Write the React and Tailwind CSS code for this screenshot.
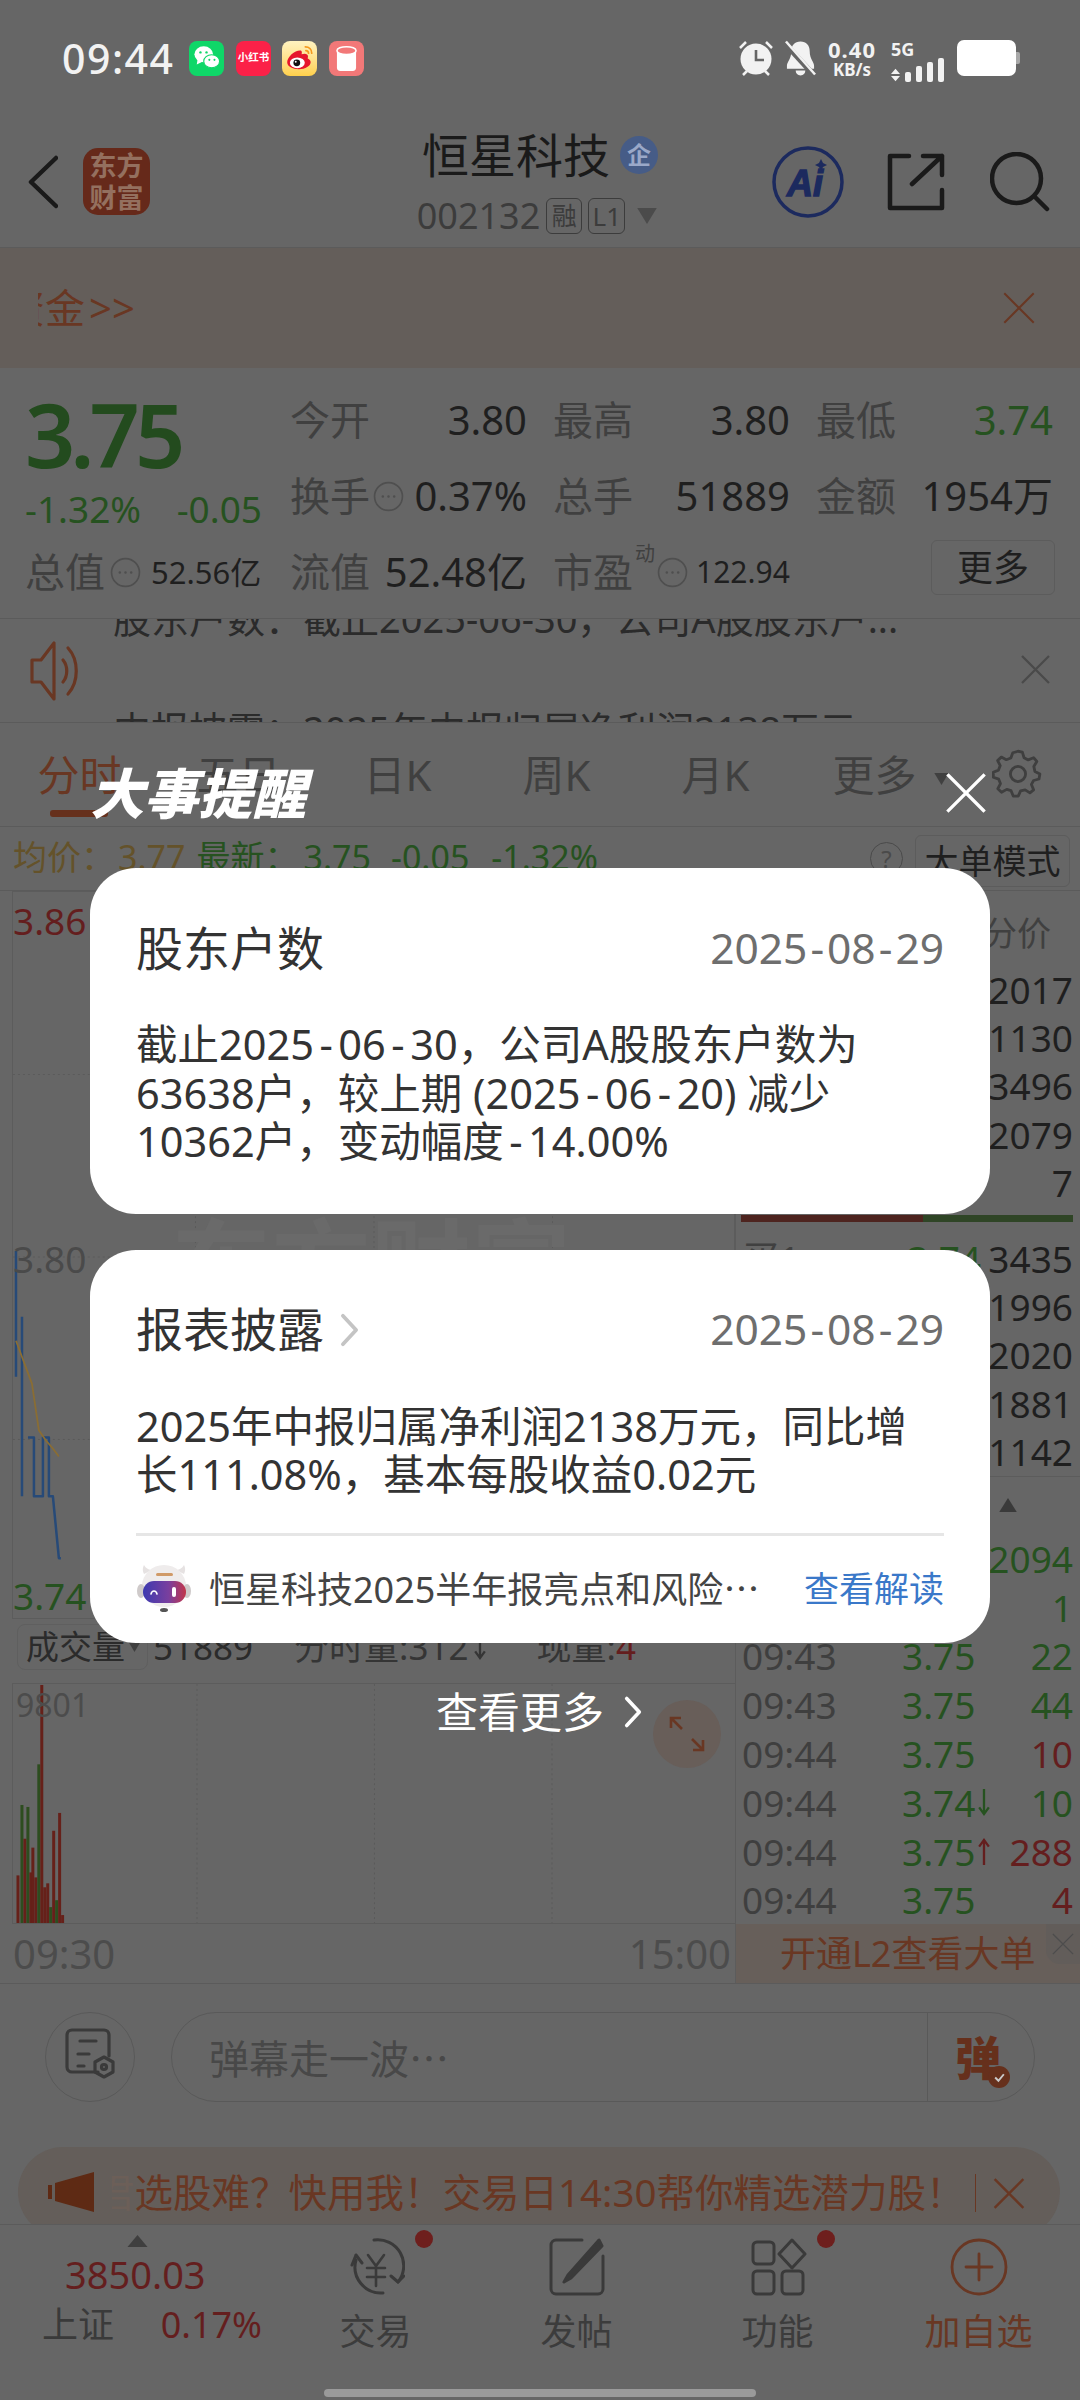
import React from 'react';

const Chevron = ({ className = '' }) => (
  <svg viewBox="0 0 20 36" className={className} fill="none" stroke="currentColor" strokeWidth="4" strokeLinecap="round" strokeLinejoin="round">
    <path d="M3 3l14 15L3 33" />
  </svg>
);

const Cross = ({ className = '', width = 2 }) => (
  <svg viewBox="0 0 32 32" className={className} fill="none" stroke="currentColor" strokeWidth={width} strokeLinecap="square">
    <path d="M2 2l28 28M30 2L2 30" />
  </svg>
);

const Dots = () => (
  <svg viewBox="0 0 30 30" className="h-[31px] w-[31px] shrink-0" fill="none" stroke="#4f4f4f" strokeWidth="1.6">
    <circle cx="15" cy="15" r="13.5" />
    <circle cx="9.5" cy="15" r="1.2" fill="#4f4f4f" stroke="none" />
    <circle cx="15" cy="15" r="1.2" fill="#4f4f4f" stroke="none" />
    <circle cx="20.5" cy="15" r="1.2" fill="#4f4f4f" stroke="none" />
  </svg>
);

// small thin arrow, the fonts here only have very wide ones
const Arrow = ({ up, className = '' }) => (
  <svg viewBox="0 0 14 30" className={`inline-block h-[29px] w-[14px] ${className}`} fill="none" stroke="currentColor" strokeWidth="2.400">
    <path d={up ? 'M7 29V3M2 10l5-7 5 7' : 'M7 1v26M2 20l5 7 5-7'} />
  </svg>
);

const StatusBar = () => (
  <div className="relative z-20 flex h-[116px] items-center pl-[62px] pr-[60px] text-[#f2f2f2]">
    <span className="mr-[15px] text-[41px] font-medium leading-none tracking-[1.5px]">09:44</span>
    <div className="flex gap-[11.5px]">
      <div className="flex h-[35px] w-[35px] items-center justify-center rounded-[8px] bg-[#0fd768]">
        <svg viewBox="0 0 30 30" className="h-[28px] w-[28px]" fill="#fff">
          <ellipse cx="11.5" cy="11" rx="10" ry="8.5" />
          <path d="M5 16l-1 6 6-3z" />
          <ellipse cx="20" cy="18.5" rx="8.5" ry="7" stroke="#0fd768" strokeWidth="1.2" />
          <circle cx="8" cy="9" r="1.3" fill="#0fd768" />
          <circle cx="14.5" cy="9" r="1.3" fill="#0fd768" />
          <circle cx="17.5" cy="17" r="1.1" fill="#0fd768" />
          <circle cx="23" cy="17" r="1.1" fill="#0fd768" />
        </svg>
      </div>
      <div className="flex h-[35px] w-[35px] items-center justify-center overflow-hidden rounded-[8px] bg-[#fb2148] text-[10.5px] font-bold text-white whitespace-nowrap">
        小红书
      </div>
      <div className="flex h-[35px] w-[35px] items-center justify-center rounded-[8px] bg-gradient-to-b from-[#fff3c0] to-[#ffd04a]">
        <svg viewBox="0 0 30 30" className="h-[32px] w-[32px]">
          <path d="M3 19c0-5 7-11 12-11 2 0 2 2 1.500 3.500 3-1.200 6-.5 6 2 0 1-.5 1.500-.2 2 1.500.7 2.700 2 2.700 3.500 0 3.500-5 6.500-11 6.500S3 23 3 19z" fill="#e6162d" />
          <ellipse cx="12.500" cy="19.500" rx="7" ry="5" fill="#fff" />
          <circle cx="12" cy="19.500" r="3.200" fill="#111" />
          <circle cx="11" cy="18.500" r="0.900" fill="#fff" />
          <path d="M20 4.500c3.500 0 6 2.500 6 6M20.500 8c1.500 0 2.500 1 2.500 2.500" fill="none" stroke="#f59a1f" strokeWidth="1.600" strokeLinecap="round" />
        </svg>
      </div>
      <div className="flex h-[35px] w-[35px] items-center justify-center rounded-[8px] bg-[#f27878]">
        <svg viewBox="0 0 24 24" className="h-[27px] w-[27px]">
          <path d="M3.500 5h17v15a3 3 0 0 1-3 3h-11a3 3 0 0 1-3-3z" fill="#fff" />
          <ellipse cx="12" cy="5" rx="8.500" ry="3.500" fill="#f27878" stroke="#fff" strokeWidth="1.400" />
        </svg>
      </div>
    </div>
    <div className="ml-auto flex items-center">
      <svg viewBox="0 0 36 36" className="h-[36px] w-[36px]" fill="#f2f2f2">
        <circle cx="18" cy="19" r="15.500" />
        <path d="M2 8l6-6M34 8l-6-6M5 35l4-4M31 35l-4-4" stroke="#f2f2f2" strokeWidth="2.500" />
        <path d="M18 10v10h8" fill="none" stroke="#666" strokeWidth="2.600" />
      </svg>
      <svg viewBox="0 0 32 36" className="ml-[11px] h-[36px] w-[31px]" fill="#f2f2f2">
        <path d="M16 1c6 0 9.500 4 9.500 10 0 8 4.500 11 4.500 15v3H2v-3c0-4 4.500-7 4.500-15C6.500 5 10 1 16 1z" />
        <path d="M11 31h10c0 3-2 5-5 5s-5-2-5-5z" />
        <path d="M0 3l30 33" stroke="#666" strokeWidth="5.500" />
        <path d="M1 1l30 34" stroke="#f2f2f2" strokeWidth="2.600" />
      </svg>
      <div className="ml-[12px] flex w-[48px] flex-col items-center font-bold leading-none">
        <span className="text-[22px] tracking-[1px]">0.40</span>
        <span className="mt-[1px] text-[17px]">KB/s</span>
      </div>
      <div className="ml-[15px] flex h-[36px] w-[56px] flex-col justify-between">
        <span className="text-[18px] font-bold leading-none">5G</span>
        <div className="flex items-end gap-[5px]">
          <svg viewBox="0 0 10 14" className="h-[14px] w-[9px]" fill="#f2f2f2">
            <path d="M5 0l5 6H0zM5 14L0 8h10z" />
          </svg>
          <i className="h-[10px] w-[6px] rounded-[2px] bg-[#f2f2f2]" />
          <i className="h-[16px] w-[6px] rounded-[2px] bg-[#f2f2f2]" />
          <i className="h-[20px] w-[6px] rounded-[2px] bg-[#f2f2f2]" />
          <i className="h-[24px] w-[6px] rounded-[2px] bg-[#f2f2f2]" />
        </div>
      </div>
      <div className="ml-[10px] h-[36px] w-[59px] rounded-[7px] bg-white" />
      <div className="h-[12px] w-[4px] rounded-r-[2px] bg-[#a8a8a8]" />
    </div>
  </div>
);

const Header = () => (
  <div className="grid h-[132px] grid-cols-[1fr_auto_1fr] border-b border-[#5b5b5b]">
    <div className="flex items-center pl-[28px]">
      <svg viewBox="0 0 30 54" className="h-[54px] w-[30px]" fill="none" stroke="#1a1a1a" strokeWidth="4.500" strokeLinecap="round" strokeLinejoin="round">
        <path d="M28 3L3 27l25 24" />
      </svg>
      <div className="ml-[25px] flex h-[67px] w-[67px] flex-col items-center justify-center rounded-[15px] bg-[#66291a] text-[27px] font-bold leading-[32px] text-[#94705f]">
        <span>东方</span>
        <span>财富</span>
      </div>
    </div>
    <div className="flex flex-col items-center pt-[6px]">
      <div className="flex h-[66px] items-center">
        <span className="text-[47px] leading-none text-[#1a1a1a]">恒星科技</span>
        <span className="ml-[10px] flex h-[38px] w-[38px] items-center justify-center rounded-full bg-[#465c87] text-[24px] font-bold text-[#9aa8c8]">企</span>
      </div>
      <div className="mt-[8px] -ml-[5px] flex h-[40px] items-center text-[#3c3c3c]">
        <span className="text-[36px] leading-none">002132</span>
        <span className="ml-[6px] flex h-[36px] w-[36px] items-center justify-center rounded-[6px] border border-[#3c3c3c] text-[25px]">融</span>
        <span className="ml-[6px] flex h-[36px] w-[37px] items-center justify-center rounded-[6px] border border-[#3c3c3c] text-[26px]">L1</span>
        <svg viewBox="0 0 22 18" className="ml-[11px] h-[16px] w-[22px]" fill="#4b4b4b">
          <path d="M0 0h22L11 18z" />
        </svg>
      </div>
    </div>
    <div className="flex items-center justify-end pr-[30px]">
      <svg viewBox="0 0 72 72" className="h-[72px] w-[72px]">
        <circle cx="36" cy="36" r="34" fill="none" stroke="#1c2a5e" strokeWidth="3.500" />
        <text x="15" y="50" fontFamily="'Liberation Sans',sans-serif" fontWeight="700" fontStyle="italic" fontSize="36" fill="#1c2a5e" stroke="#1c2a5e" strokeWidth="1.400">Ai</text>
        <path d="M49 13l2 4 4 2-4 2-2 4-2-4-4-2 4-2z" fill="#1c2a5e" />
      </svg>
      <svg viewBox="0 0 58 58" className="ml-[43px] h-[58px] w-[58px]" fill="none" stroke="#1a1a1a" strokeWidth="4.500" strokeLinecap="round" strokeLinejoin="round">
        <path d="M22 3H3v52h52V37M25 31L55 3M36 3h19v19" />
      </svg>
      <svg viewBox="0 0 60 60" className="ml-[45px] h-[60px] w-[60px]" fill="none" stroke="#1a1a1a" strokeWidth="4.500" strokeLinecap="round">
        <circle cx="26.500" cy="26.500" r="24.500" />
        <path d="M46 46l11 11" />
      </svg>
    </div>
  </div>
);

const QuoteCell = ({ label, value, valueClass = 'text-[#1f1f1f]', extra }) => (
  <div className="flex w-[237px] items-center justify-between whitespace-nowrap">
    <div className="flex items-center gap-[3px]">
      <span className="text-[40px] leading-none text-[#404040]">{label}</span>
      {extra}
    </div>
    <span className={`text-[40px] leading-none ${valueClass}`}>{value}</span>
  </div>
);

const Quote = () => (
  <div className="flex h-[250px] pt-[14px]">
    <div className="w-[290px] pl-[25px]">
      <div className="flex h-[104px] items-center text-[88px] font-semibold leading-none tracking-[-5px] text-[#234b1e]">3.75</div>
      <div className="flex h-[44px] w-[237px] items-center justify-between text-[37px] leading-none text-[#265220]">
        <span>-1.32%</span>
        <span>-0.05</span>
      </div>
      <div className="mt-[4px] flex h-[76px] items-center whitespace-nowrap">
        <span className="text-[40px] leading-none text-[#404040]">总值</span>
        <span className="ml-[5px]"><Dots /></span>
        <span className="ml-[10px] text-[31px] leading-none text-[#1f1f1f]">52.56亿</span>
      </div>
    </div>
    <div className="flex flex-col">
      <div className="flex h-[76px] gap-[26px]">
        <QuoteCell label="今开" value="3.80" />
        <QuoteCell label="最高" value="3.80" />
        <QuoteCell label="最低" value="3.74" valueClass="text-[#265220]" />
      </div>
      <div className="flex h-[76px] gap-[26px]">
        <QuoteCell label="换手" value="0.37%" extra={<Dots />} />
        <QuoteCell label="总手" value="51889" />
        <QuoteCell label="金额" value="1954万" />
      </div>
      <div className="flex h-[76px] gap-[26px]">
        <QuoteCell label="流值" value="52.48亿" />
        <div className="flex w-[237px] items-center whitespace-nowrap">
          <span className="text-[40px] leading-none text-[#404040]">市盈</span>
          <span className="mb-[36px] ml-[2px] w-[22px] text-[20px] leading-none text-[#404040]">动</span>
          <Dots />
          <span className="ml-[8px] text-[30px] leading-none text-[#1f1f1f]">122.94</span>
        </div>
        <div className="flex w-[239px] items-start justify-end pt-[6px]">
          <span className="flex h-[55px] w-[124px] items-center justify-center rounded-[6px] border border-[#5c5c5c] text-[36px] leading-none text-[#1f1f1f]">更多</span>
        </div>
      </div>
    </div>
  </div>
);

const Notice = () => (
  <div className="relative h-[105px] overflow-hidden border-y border-[#5b5b5b]">
    <div className="-mt-[56px] pl-[113px] text-[38px] text-[#2b2b2b]">
      <div className="flex h-[111px] items-center whitespace-nowrap">股东户数：截止2025-06-30，公司A股股东户...</div>
      <div className="flex h-[111px] items-center whitespace-nowrap">中报披露：2025年中报归属净利润2138万元</div>
    </div>
    <svg viewBox="0 0 50 62" className="absolute left-[30px] top-[21px] h-[62px] w-[50px]" fill="none" stroke="#693723" strokeWidth="3.200" strokeLinejoin="round" strokeLinecap="round">
      <path d="M2 20h9L24 3v56L11 42H2zM33 20c5 6 5 16 0 22M38 8c11 12 11 34 0 46" />
    </svg>
    <Cross className="absolute left-[1021px] top-[36px] h-[29px] w-[29px] text-[#4a4a4a]" width={2.5} />
  </div>
);

const Tabs = () => (
  <div className="relative flex h-[104px] border-b border-[#5b5b5b]">
    {['分时', '五日', '日K', '周K', '月K', '更多'].map((tab, i) => (
      <div key={tab} className={`relative flex w-[159px] items-center justify-center text-[42px] leading-none ${i === 0 ? 'text-[#693723]' : 'text-[#404040]'}`}>
        {tab}
        {i === 0 && <i className="absolute bottom-[9px] left-[50px] h-[7px] w-[58px] rounded-[3px] bg-[#66301c]" />}
      </div>
    ))}
    <svg viewBox="0 0 12 10" className="mt-[50px] -ml-[20px] h-[12px] w-[15px]" fill="#404040">
      <path d="M0 0h12L6 10z" />
    </svg>
    <svg viewBox="0 0 24 24" className="ml-[43px] mt-[25px] h-[52px] w-[52px]" fill="none" stroke="#3f3f3f" strokeWidth="1.300" strokeLinejoin="round">
      <path d="M12 1.500l2 .4.800 2.600 1.900 1 2.500-1 1.500 1.700-1.400 2.300.5 2.300 2.300 1.200-.4 2.300-2.500.7-1 1.800 1 2.500-1.700 1.400-2.200-1.400-2.100.5-1.100 2.400h-2.300l-1-2.500-2-.6-2.400 1.300-1.700-1.600 1.200-2.400-.8-2-2.500-.9v-2.300l2.400-1 .8-2.100-1.200-2.300 1.700-1.600 2.300 1.200 2.100-.8.900-2.400z" />
      <circle cx="12" cy="12" r="3.500" />
    </svg>
  </div>
);

const AvgRow = () => (
  <div className="relative flex h-[63px] items-start pl-[13px] pt-[10px] text-[34px] leading-[40px]">
    <span className="text-[#64522a]">均价：</span>
    <span className="ml-[3px] text-[#64522a]">3.77</span>
    <span className="ml-[11px] text-[#265220]">最新：</span>
    <span className="ml-[5px] text-[#265220]">3.75</span>
    <span className="ml-[20px] text-[#265220]">-0.05</span>
    <span className="ml-[22px] text-[#265220]">-1.32%</span>
    <span className="ml-auto mt-[5px] flex h-[33px] w-[33px] items-center justify-center rounded-full border border-[#4a4a4a] text-[24px] leading-none text-[#4a4a4a]">?</span>
    <span className="-mt-[2px] ml-[12px] mr-[10px] flex h-[52px] w-[155px] items-center justify-center rounded-[6px] border border-[#5c5c5c] text-[#1f1f1f]">大单模式</span>
  </div>
);

const priceBlue = 'M3 360V486M9 426V606L9 606M9 606M15 547V547H21V606H30V547H36V606H40L46 668H46L48 668';

const PriceChart = () => (
  <div className="relative ml-[12px] h-[728px] border border-[#5c5c5c]">
    <svg viewBox="0 0 723 728" className="absolute inset-0 h-full w-full" fill="none">
      <path d="M0 183H723M0 366H723M0 549H723" stroke="#5b5b5b" strokeWidth="1" strokeDasharray="2 3" />
      <path d="M183 0V728M362 0V728M541 0V728" stroke="#5b5b5b" strokeWidth="1" strokeDasharray="2 3" />
      <path d={priceBlue} stroke="#274a78" strokeWidth="2.500" strokeLinejoin="round" />
      <path d="M3 450L19 493L26 540L33 550L40 558L46 566" stroke="#8a6d33" strokeWidth="1.800" />
    </svg>
    <span className="absolute left-[0px] top-[8px] text-[37px] leading-[42px] text-[#641e1e]">3.86</span>
    <span className="absolute left-[0px] top-[346px] text-[37px] leading-[42px] text-[#4a4a4a]">3.80</span>
    <span className="absolute bottom-[1px] left-[0px] text-[37px] leading-[42px] text-[#265220]">3.74</span>
    <span className="absolute left-[158px] top-[322px] text-[100px] font-bold leading-[100px] text-[#6a6a6a] whitespace-nowrap">东方财富</span>
  </div>
);

const bars = [
  [1, 3, 1875, 'r'], [5, 3, 1804, 'g'], [8, 3, 1838, 'r'], [11, 3, 1806, 'g'],
  [14, 3, 1872, 'r'], [16, 3, 1847, 'r'], [19, 3, 1877, 'r'], [22, 3, 1763, 'g'],
  [25, 3, 1683, 'r'], [28, 3, 1887, 'r'], [31, 3, 1883, 'r'], [34, 3, 1907, 'g'],
  [37, 3, 1830, 'r'], [40, 3, 1900, 'g'], [43, 3, 1812, 'r'], [46, 3, 1915, 'r'],
];

const VolumeChart = () => (
  <div className="relative ml-[12px] mt-[9px] h-[241px] border-y border-l border-[#5c5c5c]">
    <svg viewBox="0 0 723 241" className="absolute inset-0 h-full w-full" fill="none">
      <path d="M183 0V241M362 0V241M541 0V241" stroke="#5b5b5b" strokeWidth="1" strokeDasharray="2 3" />
      {bars.map(([x, w, top, c]) => (
        <rect key={x} x={x} y={top - 1682} width={w} height={1923 - top} fill={c === 'r' ? '#662019' : '#2d4d1f'} />
      ))}
    </svg>
    <span className="absolute left-[3px] top-[2px] text-[32px] leading-[38px] text-[#4c4c4c]">9801</span>
    <div className="absolute left-[640px] top-[16px] flex h-[68px] w-[68px] items-center justify-center rounded-full bg-[#685e59]">
      <svg viewBox="0 0 36 36" className="h-[36px] w-[36px]" fill="none" stroke="#693723" strokeWidth="2.600">
        <path d="M2 12V2h10M2 2l11 11M34 24v10H24M34 34L23 23" />
      </svg>
    </div>
  </div>
);

const ChartLeft = () => (
  <div className="w-[735px]">
    <PriceChart />
    <div className="flex h-[55px] items-center pl-[17px] text-[35px] leading-none text-[#2b2b2b] whitespace-nowrap">
      <div className="flex h-[46px] w-[131px] items-center rounded-[8px] border border-[#5f5f5f] pl-[8px] text-[33px]">
        成交量
        <svg viewBox="0 0 12 10" className="ml-[3px] h-[13px] w-[13px]" fill="#404040">
          <path d="M0 0h12L6 10z" />
        </svg>
      </div>
      <span className="ml-[5px]">51889</span>
      <span className="ml-[41px] flex items-center text-[#353535]">分时量:312<Arrow className="ml-[4px]" /></span>
      <span className="ml-[50px] text-[#353535]">现量:<span className="text-[#641e1e]">4</span></span>
    </div>
    <VolumeChart />
    <div className="flex h-[60px] items-center justify-between pl-[13px] pr-[4px] text-[40px] leading-none text-[#4c4c4c]">
      <span>09:30</span>
      <span>15:00</span>
    </div>
  </div>
);

const sellVols = ['2017', '1130', '3496', '2079', '7'];
const buyVols = ['3435', '1996', '2020', '1881', '1142'];

const trades = [
  { t: '09:43', p: '3.75', v: '2094', c: 'g' },
  { t: '09:43', p: '3.75', v: '1', c: 'g' },
  { t: '09:43', p: '3.75', v: '22', c: 'g' },
  { t: '09:43', p: '3.75', v: '44', c: 'g' },
  { t: '09:44', p: '3.75', v: '10', c: 'r' },
  { t: '09:44', p: '3.74', v: '10', c: 'g', arrow: 'down' },
  { t: '09:44', p: '3.75', v: '288', c: 'r', arrow: 'up' },
  { t: '09:44', p: '3.75', v: '4', c: 'r' },
];

const ChartRight = () => (
  <div className="w-[345px] border-l border-[#5c5c5c] text-[37px] leading-none">
    <div className="flex h-[74px] items-end justify-end pb-[15px] pr-[29px] text-[34px] text-[#404040]">分价</div>
    {sellVols.map((v) => (
      <div key={v} className="flex h-[48.4px] items-center justify-end pr-[7px] text-[#1f1f1f]">{v}</div>
    ))}
    <div className="mx-[5px] mt-[8px] flex h-[7px] pr-[2px]">
      <i className="w-[182px] bg-[#4e241f]" />
      <i className="flex-1 bg-[#2f4526]" />
    </div>
    <div className="mt-[12px] flex h-[48.4px] items-center justify-between pl-[6px] pr-[7px] text-[#1f1f1f]">
      <span className="text-[#404040]">买1</span>
      <span className="ml-[100px] text-[#265220]">3.74</span>
      <span>{buyVols[0]}</span>
    </div>
    {buyVols.slice(1).map((v) => (
      <div key={v} className="flex h-[48.4px] items-center justify-end pr-[7px] text-[#1f1f1f]">{v}</div>
    ))}
    <div className="flex h-[58px] items-center justify-end border-t border-[#5c5c5c] pr-[62px]">
      <svg viewBox="0 0 20 16" className="h-[14px] w-[20px]" fill="#3a3a3a">
        <path d="M10 0l10 16H0z" />
      </svg>
    </div>
    {trades.map((row, i) => (
      <div key={i} className="flex h-[48.8px] items-center pl-[6px] pr-[7px]">
        <span className="w-[160px] text-[#3f3f3f]">{row.t}</span>
        <span className="text-[#265220]">{row.p}</span>
        {row.arrow === 'down' && <Arrow className="ml-[2px] text-[#265220]" />}
        {row.arrow === 'up' && <Arrow up className="ml-[2px] text-[#641e1e]" />}
        <span className={`ml-auto ${row.c === 'r' ? 'text-[#641e1e]' : 'text-[#265220]'}`}>{row.v}</span>
      </div>
    ))}
    <div className="relative flex h-[59px] items-center bg-[#675f5a] pl-[44px] text-[36px] text-[#693723]">
      开通L2查看大单
      <div className="absolute right-0 top-0 flex h-[40px] w-[34px] items-center justify-center rounded-bl-[14px] bg-[#625d5a]">
        <Cross className="h-[26px] w-[22px] text-[#4d4d4d]" />
      </div>
    </div>
  </div>
);

const DanmuBar = () => (
  <div className="flex h-[164px] border-t border-[#5b5b5b] pl-[45px] pt-[28px]">
    <div className="flex h-[90px] w-[90px] items-center justify-center rounded-full border border-[#595959]">
      <svg viewBox="0 0 52 58" className="h-[58px] w-[52px]" fill="none" stroke="#3a3a3a" strokeWidth="3.200" strokeLinecap="round" strokeLinejoin="round">
        <path d="M34 44H8a5 5 0 0 1-5-5V7a5 5 0 0 1 5-5h32a5 5 0 0 1 5 5v21M16 13h16M14 26h11M14 38h6" />
        <path d="M40 29l9 5v10l-9 5-9-5V34z" />
        <circle cx="40" cy="39" r="2.500" />
      </svg>
    </div>
    <div className="ml-[36px] flex h-[90px] w-[864px] items-center rounded-[45px] border border-[#595959] pl-[37px]">
      <span className="font-['Noto_Sans_CJK_SC',sans-serif] text-[40px] leading-none text-[#484848]">弹幕走一波…</span>
      <div className="relative ml-auto flex h-full w-[107px] items-center border-l border-[#595959] pl-[27px] text-[46px] font-black leading-none text-[#66301c]">
        弹
        <span className="absolute left-[60px] top-[53px] flex h-[22px] w-[22px] items-center justify-center rounded-full bg-[#66301c]">
          <svg viewBox="0 0 12 12" className="h-[13px] w-[13px]" fill="none" stroke="#c9c9c9" strokeWidth="1.800">
            <path d="M2 6l3 3 5-6" />
          </svg>
        </span>
      </div>
    </div>
  </div>
);

const AdBanner = () => (
  <div className="h-[77px] overflow-hidden px-[18px]">
    <div className="flex h-[90px] w-[1042px] items-start rounded-[45px] bg-[#645e5a] pl-[30px] pt-[23px] text-[38.5px] leading-[44px] text-[#693723]">
      <svg viewBox="0 0 46 40" className="mt-[2px] h-[40px] w-[46px] shrink-0" fill="#5e2a14">
        <path d="M0 13h4v14H0zM7 11l39-11v40L7 29z" />
      </svg>
      <div className="ml-[18px] w-[836px] overflow-hidden whitespace-nowrap">
        <span className="-ml-[16px] inline-block text-[#6c5f58]">君</span>
        <span>选股难？快用我！交易日14:30帮你精选潜力股！</span>
      </div>
      <i className="ml-[27px] mt-[4px] h-[38px] w-px bg-[#693723]" />
      <Cross className="ml-[17px] mt-[8px] h-[31px] w-[32px] text-[#693723]" width={2.4} />
    </div>
  </div>
);

const NavItem = ({ label, dot, orange, children }) => (
  <div className={`relative flex w-[201px] flex-col items-center pt-[13px] ${orange ? 'text-[#693723]' : 'text-[#3a3a3a]'}`}>
    <div className="h-[58px] w-[58px]">{children}</div>
    <span className={`mt-[15px] text-[36px] leading-[42px] ${orange ? '' : 'text-[#3c3c3c]'}`}>{label}</span>
    {dot && <i className="absolute left-[140px] top-[5px] h-[18px] w-[18px] rounded-full bg-[#6e1f1d]" />}
  </div>
);

const BottomNav = () => (
  <div className="relative flex h-[176px] border-t border-[#5b5b5b]">
    <div className="relative w-[275px] pl-[42px]">
      <svg viewBox="0 0 20 12" className="absolute left-[127px] top-[10px] h-[12px] w-[21px]" fill="#3f3f3f">
        <path d="M10 0l10 12H0z" />
      </svg>
      <div className="pl-[23px] pt-[28px] text-[38px] leading-[42px] text-[#641e1e]">3850.03</div>
      <div className="mt-[8px] flex w-[220px] items-center justify-between text-[36px] leading-[44px]">
        <span className="text-[#3a3a3a]">上证</span>
        <span className="text-[#641e1e]">0.17%</span>
      </div>
    </div>
    <NavItem label="交易" dot>
      <svg viewBox="0 0 58 58" className="h-full w-full" fill="none" stroke="currentColor" strokeWidth="3" strokeLinecap="round">
        <path d="M9 22a26 26 0 0 0 27 33M27 2a26 26 0 0 1 24 42" />
        <path d="M9 17l-4 10M9 17l6 8M51 44l-7-6M51 44l6-6" />
        <path d="M21 17l8 11 8-11M20 30h18M20 39h18M29 28v20" strokeWidth="2.600" />
      </svg>
    </NavItem>
    <NavItem label="发帖">
      <svg viewBox="0 0 58 58" className="h-full w-full" fill="none" stroke="currentColor" strokeWidth="3" strokeLinecap="round" strokeLinejoin="round">
        <path d="M34 2H8a5 5 0 0 0-5 5v44a5 5 0 0 0 5 5h42a5 5 0 0 0 5-5V18" />
        <path d="M20 37l-4 7 7-4L54 8l-3-6z" fill="currentColor" />
      </svg>
    </NavItem>
    <NavItem label="功能" dot>
      <svg viewBox="0 0 58 58" className="h-full w-full" fill="none" stroke="currentColor" strokeWidth="3" strokeLinejoin="round">
        <rect x="4" y="4" width="21" height="22" rx="4" />
        <rect x="4" y="33" width="21" height="23" rx="4" />
        <rect x="33" y="33" width="21" height="23" rx="4" />
        <path d="M43 2l13 14-13 14-13-14z" />
      </svg>
    </NavItem>
    <NavItem label="加自选" orange>
      <svg viewBox="0 0 58 58" className="h-full w-full" fill="none" stroke="currentColor" strokeWidth="2.800" strokeLinecap="round">
        <circle cx="29" cy="29" r="27" />
        <path d="M29 16v26M16 29h26" />
      </svg>
    </NavItem>
    <i className="absolute bottom-[3px] left-[324px] h-[8px] w-[432px] rounded-[4px] bg-[#9a9a9a]" />
  </div>
);

const Mascot = () => (
  <svg viewBox="0 0 56 48" className="h-[48px] w-[56px] shrink-0">
    <defs>
      <linearGradient id="visor" x1="0" y1="0" x2="1" y2="0">
        <stop offset="0" stopColor="#3d3ab0" />
        <stop offset="0.6" stopColor="#7a3f9e" />
        <stop offset="1" stopColor="#c2364a" />
      </linearGradient>
    </defs>
    <path d="M8 10C6 6 7 3 8 1c2 4 6 5 8 5M48 10c2-4 1-7 0-9-2 4-6 5-8 5" fill="#e6e2e2" />
    <ellipse cx="28" cy="22" rx="22" ry="21" fill="#efecec" />
    <ellipse cx="5" cy="27" rx="4" ry="7" fill="#cfcaca" />
    <ellipse cx="51" cy="27" rx="4" ry="7" fill="#cfcaca" />
    <rect x="20" y="9" width="17" height="3" rx="1.500" fill="#d09a68" />
    <rect x="7" y="17" width="43" height="22" rx="11" fill="url(#visor)" />
    <path d="M15 30c1-4 5-4 6 0" fill="none" stroke="#fff" strokeWidth="1.600" strokeLinecap="round" />
    <rect x="36" y="23" width="4" height="10" rx="2" fill="#fff" />
    <ellipse cx="28" cy="46" rx="4" ry="2" fill="#555" />
  </svg>
);

// the hyphens in the picture are much wider than the ones of Noto Sans
const spacedDashes = (line, cls) =>
  line.split('-').map((part, i) => (
    <React.Fragment key={i}>
      {i > 0 && <span className={cls}>-</span>}
      {part}
    </React.Fragment>
  ));

const EventCard = ({ title, arrow, lines, children }) => (
  <div className="rounded-[46px] bg-white px-[46px] pt-[52px] text-[#333]">
    <div className="flex h-[56px] items-center">
      <span className="text-[47px] leading-none">{title}</span>
      {arrow && <Chevron className="ml-[16px] h-[34px] w-[19px] text-[#c4c4c4]" />}
      <span className="ml-auto text-[42.5px] leading-none text-[#6e6e6e]">{spacedDashes('2025-08-29', 'mx-[3px]')}</span>
    </div>
    <div className="mt-[44px] text-[41.5px] leading-[48.5px]">
      {lines.map((line) => (
        <div key={line} className="whitespace-nowrap">{spacedDashes(line, 'mx-[5.5px]')}</div>
      ))}
    </div>
    {children}
  </div>
);

const EventModal = () => (
  <div className="absolute inset-0 z-10 flex flex-col px-[90px] pt-[765px]">
    <div className="flex h-[56px] items-center">
      <span className="text-[54px] font-black italic leading-none text-white">大事提醒</span>
      <Cross className="ml-auto mr-[3px] h-[40px] w-[42px] text-white" width={2.6} />
    </div>
    <div className="mt-[47px]">
      <EventCard
        title="股东户数"
        lines={['截止2025-06-30，公司A股股东户数为', '63638户，较上期 (2025-06-20) 减少', '10362户，变动幅度-14.00%']}
      >
        <div className="h-[48px]" />
      </EventCard>
    </div>
    <div className="mt-[36px]">
      <EventCard
        title="报表披露"
        arrow
        lines={['2025年中报归属净利润2138万元，同比增', '长111.08%，基本每股收益0.02元']}
      >
        <div className="mt-[34px] border-t-[3px] border-[#e6e6e6]">
          <div className="flex h-[107px] items-center pb-[2px]">
            <Mascot />
            <span className="ml-[17px] text-[36px] leading-none text-[#444]">
              恒星科技2025半年报亮点和风险<span className="font-['Noto_Sans_CJK_SC',sans-serif]">…</span>
            </span>
            <span className="ml-auto text-[35px] leading-none text-[#3a78c9]">查看解读</span>
          </div>
        </div>
      </EventCard>
    </div>
    <div className="mt-[39px] flex h-[60px] items-center justify-center pr-[2px] text-[42px] leading-none text-white">
      查看更多
      <Chevron className="ml-[20px] h-[34px] w-[18px]" />
    </div>
  </div>
);

export default function App() {
  return (
    <div className="relative h-[2400px] w-[1080px] overflow-hidden bg-[#666666] font-['Noto_Sans','Noto_Sans_CJK_SC',sans-serif]">
      <StatusBar />
      <Header />
      <div className="flex h-[120px] items-center justify-between bg-[#645e5a] pl-[38px] pr-[45px] text-[40px] leading-none text-[#693723]">
        <div className="w-[110px] overflow-hidden whitespace-nowrap">
          <span className="-ml-[33px] inline-block">资金<span className="ml-[4px]">&gt;&gt;</span></span>
        </div>
        <Cross className="h-[32px] w-[32px]" />
      </div>
      <Quote />
      <Notice />
      <Tabs />
      <AvgRow />
      <div className="flex h-[1093px] border-t border-[#5b5b5b]">
        <ChartLeft />
        <ChartRight />
      </div>
      <DanmuBar />
      <AdBanner />
      <BottomNav />
      <EventModal />
    </div>
  );
}
